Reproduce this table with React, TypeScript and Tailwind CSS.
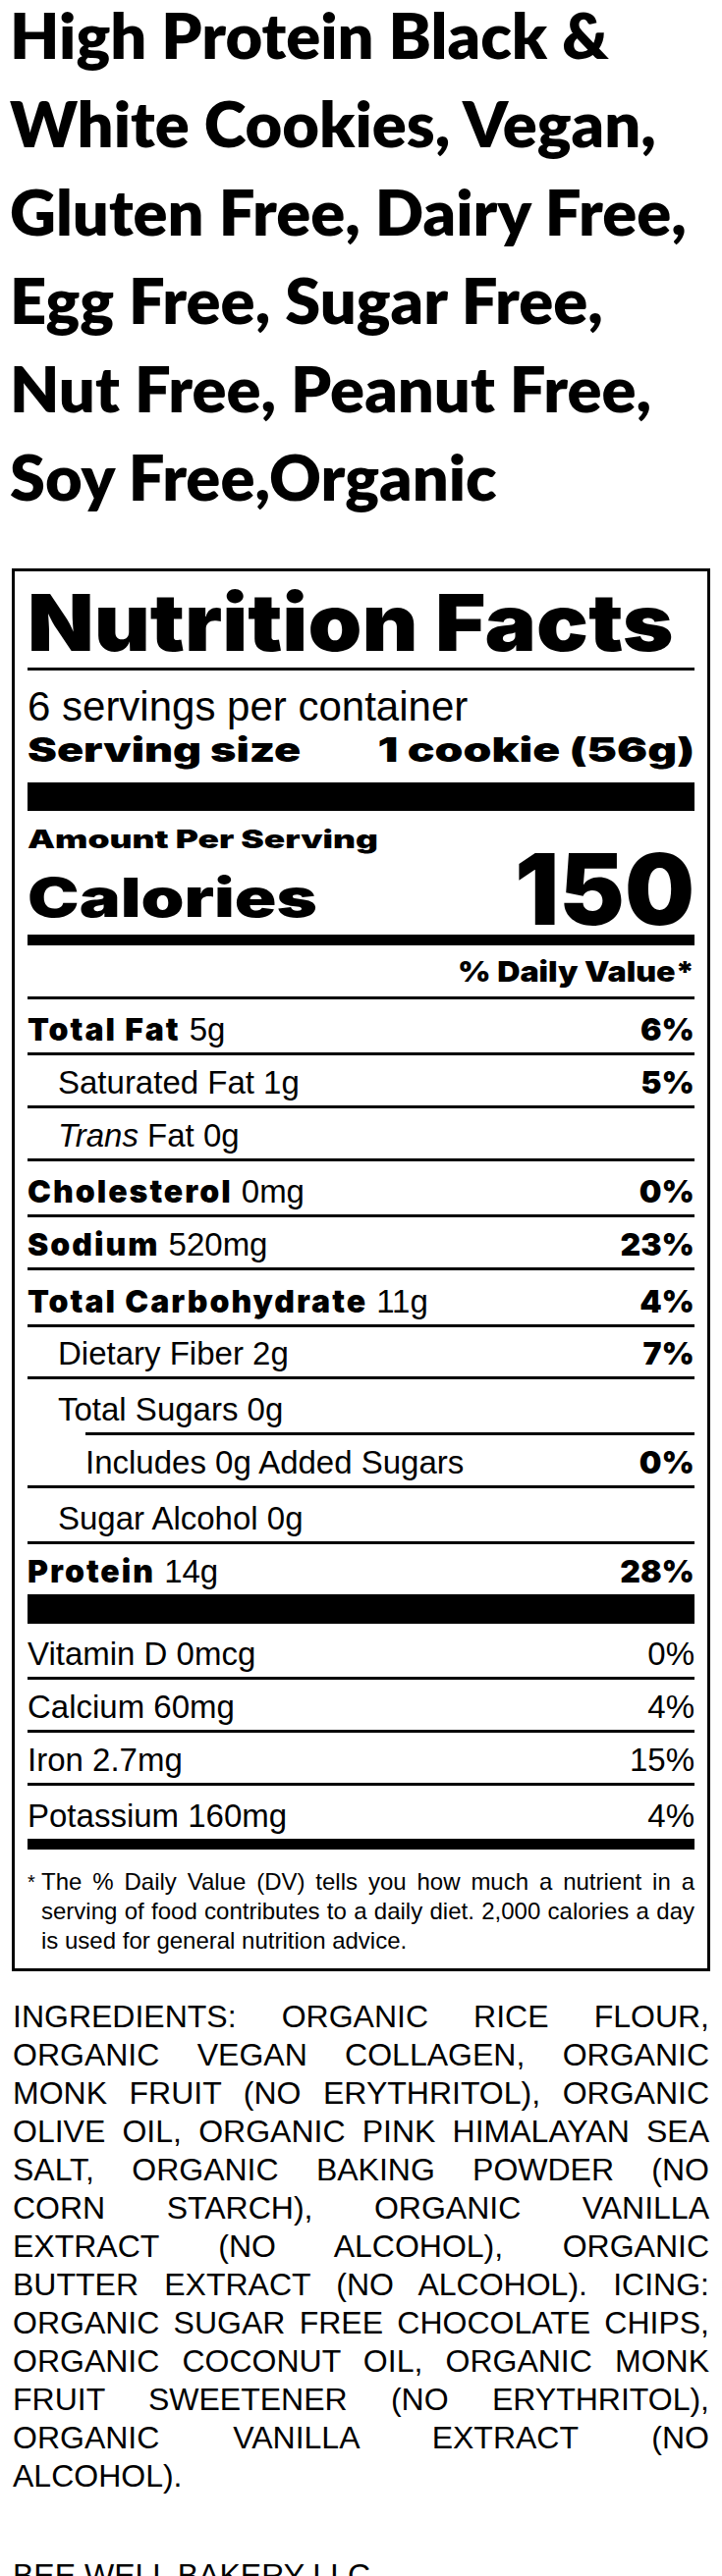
import React from 'react';

const heavy = "font-['Inter',sans-serif] font-black";

const titleLines = [
  'High Protein Black &',
  'White Cookies, Vegan,',
  'Gluten Free, Dairy Free,',
  'Egg Free, Sugar Free,',
  'Nut Free, Peanut Free,',
  'Soy Free,Organic',
];

type Row = {
  label: string;
  amount: string;
  dv?: string;
  bold?: boolean;
  italic?: string;
  indent?: number;
  h: string;
};

const nutrients: Row[] = [
  { label: 'Total Fat', amount: '5g', dv: '6%', bold: true, h: 'h-[57px]' },
  { label: 'Saturated Fat', amount: '1g', dv: '5%', indent: 1, h: 'h-[54px]' },
  { label: 'Fat', italic: 'Trans', amount: '0g', indent: 1, h: 'h-[54px]' },
  { label: 'Cholesterol', amount: '0mg', dv: '0%', bold: true, h: 'h-[57px]' },
  { label: 'Sodium', amount: '520mg', dv: '23%', bold: true, h: 'h-[54px]' },
  { label: 'Total Carbohydrate', amount: '11g', dv: '4%', bold: true, h: 'h-[58px]' },
  { label: 'Dietary Fiber', amount: '2g', dv: '7%', indent: 1, h: 'h-[53px]' },
  { label: 'Total Sugars', amount: '0g', indent: 1, h: 'h-[57px]' },
  { label: 'Includes 0g Added Sugars', amount: '', dv: '0%', indent: 2, h: 'h-[54px]' },
  { label: 'Sugar Alcohol', amount: '0g', indent: 1, h: 'h-[57px]' },
  { label: 'Protein', amount: '14g', dv: '28%', bold: true, h: 'h-[54px]' },
];

const vitamins = [
  { label: 'Vitamin D 0mcg', dv: '0%', h: 'h-[54px]' },
  { label: 'Calcium 60mg', dv: '4%', h: 'h-[54px]' },
  { label: 'Iron 2.7mg', dv: '15%', h: 'h-[54px]' },
  { label: 'Potassium 160mg', dv: '4%', h: 'h-[57px]' },
];

const ingredients = [
  'INGREDIENTS: ORGANIC RICE FLOUR,',
  'ORGANIC VEGAN COLLAGEN, ORGANIC',
  'MONK FRUIT (NO ERYTHRITOL), ORGANIC',
  'OLIVE OIL, ORGANIC PINK HIMALAYAN SEA',
  'SALT, ORGANIC BAKING POWDER (NO',
  'CORN STARCH), ORGANIC VANILLA',
  'EXTRACT (NO ALCOHOL), ORGANIC',
  'BUTTER EXTRACT (NO ALCOHOL). ICING:',
  'ORGANIC SUGAR FREE CHOCOLATE CHIPS,',
  'ORGANIC COCONUT OIL, ORGANIC MONK',
  'FRUIT SWEETENER (NO ERYTHRITOL),',
  'ORGANIC VANILLA EXTRACT (NO',
];

function NutrientRow({ row }: { row: Row }) {
  return (
    <div
      className={`flex items-end justify-between border-t-[3px] border-black pb-[7px] ${row.h} ${
        row.indent === 2 ? 'ml-[59px]' : ''
      }`}
    >
      <div className={`text-[33px] leading-none ${row.indent === 1 ? 'pl-[31px]' : ''}`}>
        {row.bold ? <span className={`${heavy} text-[32px] tracking-[2px]`}>{row.label}</span> : null}
        {row.italic ? <span className="italic">{row.italic} </span> : null}
        {!row.bold ? row.label : null}
        {row.amount ? ' ' + row.amount : null}
      </div>
      {row.dv ? <div className={`${heavy} text-[32px] leading-none`}>{row.dv}</div> : null}
    </div>
  );
}

export default function App() {
  return (
    <div className="min-h-screen bg-white text-black font-['Liberation_Sans',Arial,sans-serif]">
      {/* product title */}
      <div className="-mt-[10px] px-[10px] font-['Lato',sans-serif] text-[65px] font-extrabold leading-[90px]">
        {titleLines.map((t) => (
          <div key={t}>{t}</div>
        ))}
      </div>

      {/* nutrition label */}
      <div className="mx-[12px] mt-[49px] border-[3px] border-black px-[13px]">
        <div className={`${heavy} pt-[12px] pb-[6px] text-[80px] leading-none`}>
          <span className="inline-block origin-left scale-x-[1.1]">Nutrition Facts</span>
        </div>
        <div className="h-[3px] bg-black" />

        <div className="pt-[15px] pb-[11px]">
          <div className="text-[42px] leading-[44px]">6 servings per container</div>
          <div className={`${heavy} flex justify-between text-[34px] leading-[44px]`}>
            <span className="inline-block origin-left scale-x-[1.32]">Serving size</span>
            <span className="inline-block origin-right scale-x-[1.36]">1 cookie (56g)</span>
          </div>
        </div>
        <div className="h-[29px] bg-black" />

        <div className={`${heavy} mt-[16px] text-[26px] leading-none`}>
          <span className="inline-block origin-left scale-x-[1.36]">Amount Per Serving</span>
        </div>
        <div className={`${heavy} flex h-[82px] items-end justify-between`}>
          <span className="mb-[8px] inline-block origin-left scale-x-[1.28] text-[55px] leading-none">Calories</span>
          <span className="-mb-[6px] text-[100px] leading-none">150</span>
        </div>
        <div className="mt-[2px] h-[11px] bg-black" />

        <div className={`${heavy} h-[52px] pt-[12px] text-right text-[29px] leading-none`}>
          <span className="inline-block origin-right scale-x-[1.11]">% Daily Value*</span>
        </div>

        {nutrients.map((r) => (
          <NutrientRow key={r.label} row={r} />
        ))}
        <div className="h-[30px] bg-black" />

        {vitamins.map((v, i) => (
          <div
            key={v.label}
            className={`flex items-end justify-between pb-[7px] text-[33px] leading-none ${v.h} ${
              i > 0 ? 'border-t-[3px] border-black' : ''
            }`}
          >
            <span>{v.label}</span>
            <span>{v.dv}</span>
          </div>
        ))}
        <div className="h-[11px] bg-black" />

        <div className="flex pt-[18px] pb-[13px] text-[24px] leading-[30px]">
          <span className="w-[14px] shrink-0 text-[20px]">*</span>
          <div className="flex-1">
            <div className="text-justify [text-align-last:justify]">
              The % Daily Value (DV) tells you how much a nutrient in a
            </div>
            <div className="text-justify [text-align-last:justify]">
              serving of food contributes to a daily diet. 2,000 calories a day
            </div>
            <div>is used for general nutrition advice.</div>
          </div>
        </div>
      </div>

      {/* ingredients */}
      <div className="mx-[13px] mt-[27px] text-[32px] leading-[39px]">
        {ingredients.map((l) => (
          <div key={l} className="text-justify [text-align-last:justify]">
            {l}
          </div>
        ))}
        <div>ALCOHOL).</div>
      </div>

      <div className="mx-[13px] mt-[62px] pb-[40px] text-[32px] leading-[39px]">BEE WELL BAKERY LLC</div>
    </div>
  );
}
